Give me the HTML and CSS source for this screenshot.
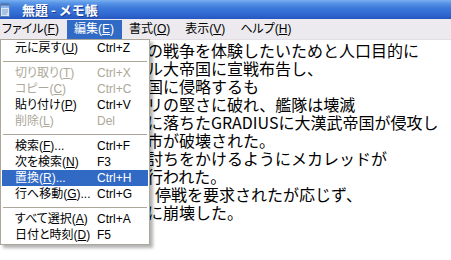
FILE: index.html
```html
<!DOCTYPE html>
<html lang="ja">

<head>
    <meta charset="UTF-8">
    <title>無題 - メモ帳</title>
    <link rel="stylesheet" href="styles.css">
</head>

<body>
    <div class="window">
        <div class="titlebar">
            <svg class="app-icon" width="10" height="14" viewBox="0 0 10 14">
                <rect x="0.5" y="1.5" width="9" height="12" fill="#d8e8fa" stroke="#5b7fb6" />
                <rect x="1" y="2" width="8" height="3" fill="#8fb8ea" />
                <path d="M2 7h6M2 9h6M2 11h5" stroke="#7d9cc9" stroke-width="1" />
                <path d="M2 0v3M4 0v3M6 0v3M8 0v3" stroke="#4a6a9e" stroke-width="1" />
            </svg>
            <span class="title">無題 - メモ帳</span>
        </div>

        <div class="menubar">
            <span class="menu-item">ファイル(<u>F</u>)</span>
            <span class="menu-item open">編集(<u>E</u>)</span>
            <span class="menu-item">書式(<u>O</u>)</span>
            <span class="menu-item">表示(<u>V</u>)</span>
            <span class="menu-item">ヘルプ(<u>H</u>)</span>
        </div>

        <!-- 左側はメニューに隠れている -->
        <div class="editor">の戦争を体験したいためと人口目的に
ル大帝国に宣戦布告し、
国に侵略するも
リの堅さに破れ、艦隊は壊滅
に落ちたGRADIUSに大漢武帝国が侵攻し
市が破壊された。
討ちをかけるようにメカレッドが
行われた。
&ensp;停戦を要求されたが応じず、
に崩壊した。</div>

        <!-- 編集メニュー -->
        <div class="dropdown">
            <div class="row"><span class="label">元に戻す(<u>U</u>)</span><span>Ctrl+Z</span></div>
            <div class="sep"></div>
            <div class="row disabled"><span class="label">切り取り(<u>T</u>)</span><span>Ctrl+X</span></div>
            <div class="row disabled"><span class="label">コピー(<u>C</u>)</span><span>Ctrl+C</span></div>
            <div class="row"><span class="label">貼り付け(<u>P</u>)</span><span>Ctrl+V</span></div>
            <div class="row disabled"><span class="label">削除(<u>L</u>)</span><span>Del</span></div>
            <div class="sep"></div>
            <div class="row"><span class="label">検索(<u>F</u>)...</span><span>Ctrl+F</span></div>
            <div class="row"><span class="label">次を検索(<u>N</u>)</span><span>F3</span></div>
            <div class="row active"><span class="label">置換(<u>R</u>)...</span><span>Ctrl+H</span></div>
            <div class="row"><span class="label">行へ移動(<u>G</u>)...</span><span>Ctrl+G</span></div>
            <div class="sep"></div>
            <div class="row"><span class="label">すべて選択(<u>A</u>)</span><span>Ctrl+A</span></div>
            <div class="row"><span class="label">日付と時刻(<u>D</u>)</span><span>F5</span></div>
        </div>
    </div>
</body>

</html>
```

FILE: styles.css
```css
body {
    margin: 0;
    background: #fff;
    font-family: "Liberation Sans", "Noto Sans CJK JP", sans-serif;
}

.window {
    position: relative;
    width: 451px;
    height: 260px;
    overflow: hidden;
}


/* タイトルバー */

.titlebar {
    display: flex;
    align-items: center;
    height: 19px;
    background: linear-gradient(to bottom, #7ab0f0 0, #5895e6 3px, #3d79da 8px, #306ad2 14px, #2656bf 19px);
}

.titlebar .app-icon {
    flex: none;
}

.titlebar .title {
    margin-left: 12px;
    color: #fff;
    font-family: "Noto Sans CJK JP", sans-serif;
    font-size: 13px;
    font-weight: 700;
    line-height: 19px;
    text-shadow: 1px 1px 0 #1c3f93;
}


/* メニューバー */

.menubar {
    display: flex;
    height: 20px;
    background: #eceaee;
    font-size: 12px;
    font-feature-settings: "palt";
}

.menubar .menu-item {
    height: 19px;
    margin-top: 1px;
    padding: 0 8px 0 7px;
    line-height: 19px;
    color: #000;
}

.menubar .menu-item:first-child {
    padding-left: 2px;
}

.menubar .menu-item.open {
    background: #316ac5;
    color: #fff;
}


/* テキスト */

.editor {
    height: 219px;
    padding: 1px 0 0 147px;
    border-top: 1px solid #e2e0e4;
    background: #fff;
    color: #000;
    font-family: "Noto Sans CJK JP", sans-serif;
    font-size: 16px;
    line-height: 18px;
    white-space: pre;
    overflow: hidden;
}


/* 編集メニュー */

.dropdown {
    position: absolute;
    top: 39px;
    left: 0;
    width: 146px;
    padding: 0 1px 1px;
    background: #fff;
    border: 1px solid #aca899;
    box-shadow: 3px 3px 3px rgba(0, 0, 0, 0.3);
    font-size: 12px;
    font-feature-settings: "palt";
}

.dropdown .row {
    display: flex;
    height: 16px;
    padding-left: 13px;
    line-height: 16px;
    color: #000;
}

.dropdown .row .label {
    width: 82px;
}

.dropdown .row.disabled {
    color: #aca899;
}

.dropdown .row.active {
    background: #316ac5;
    color: #fff;
}

.dropdown .sep {
    height: 1px;
    margin: 5px 1px 3px;
    background: #aca899;
}
```
